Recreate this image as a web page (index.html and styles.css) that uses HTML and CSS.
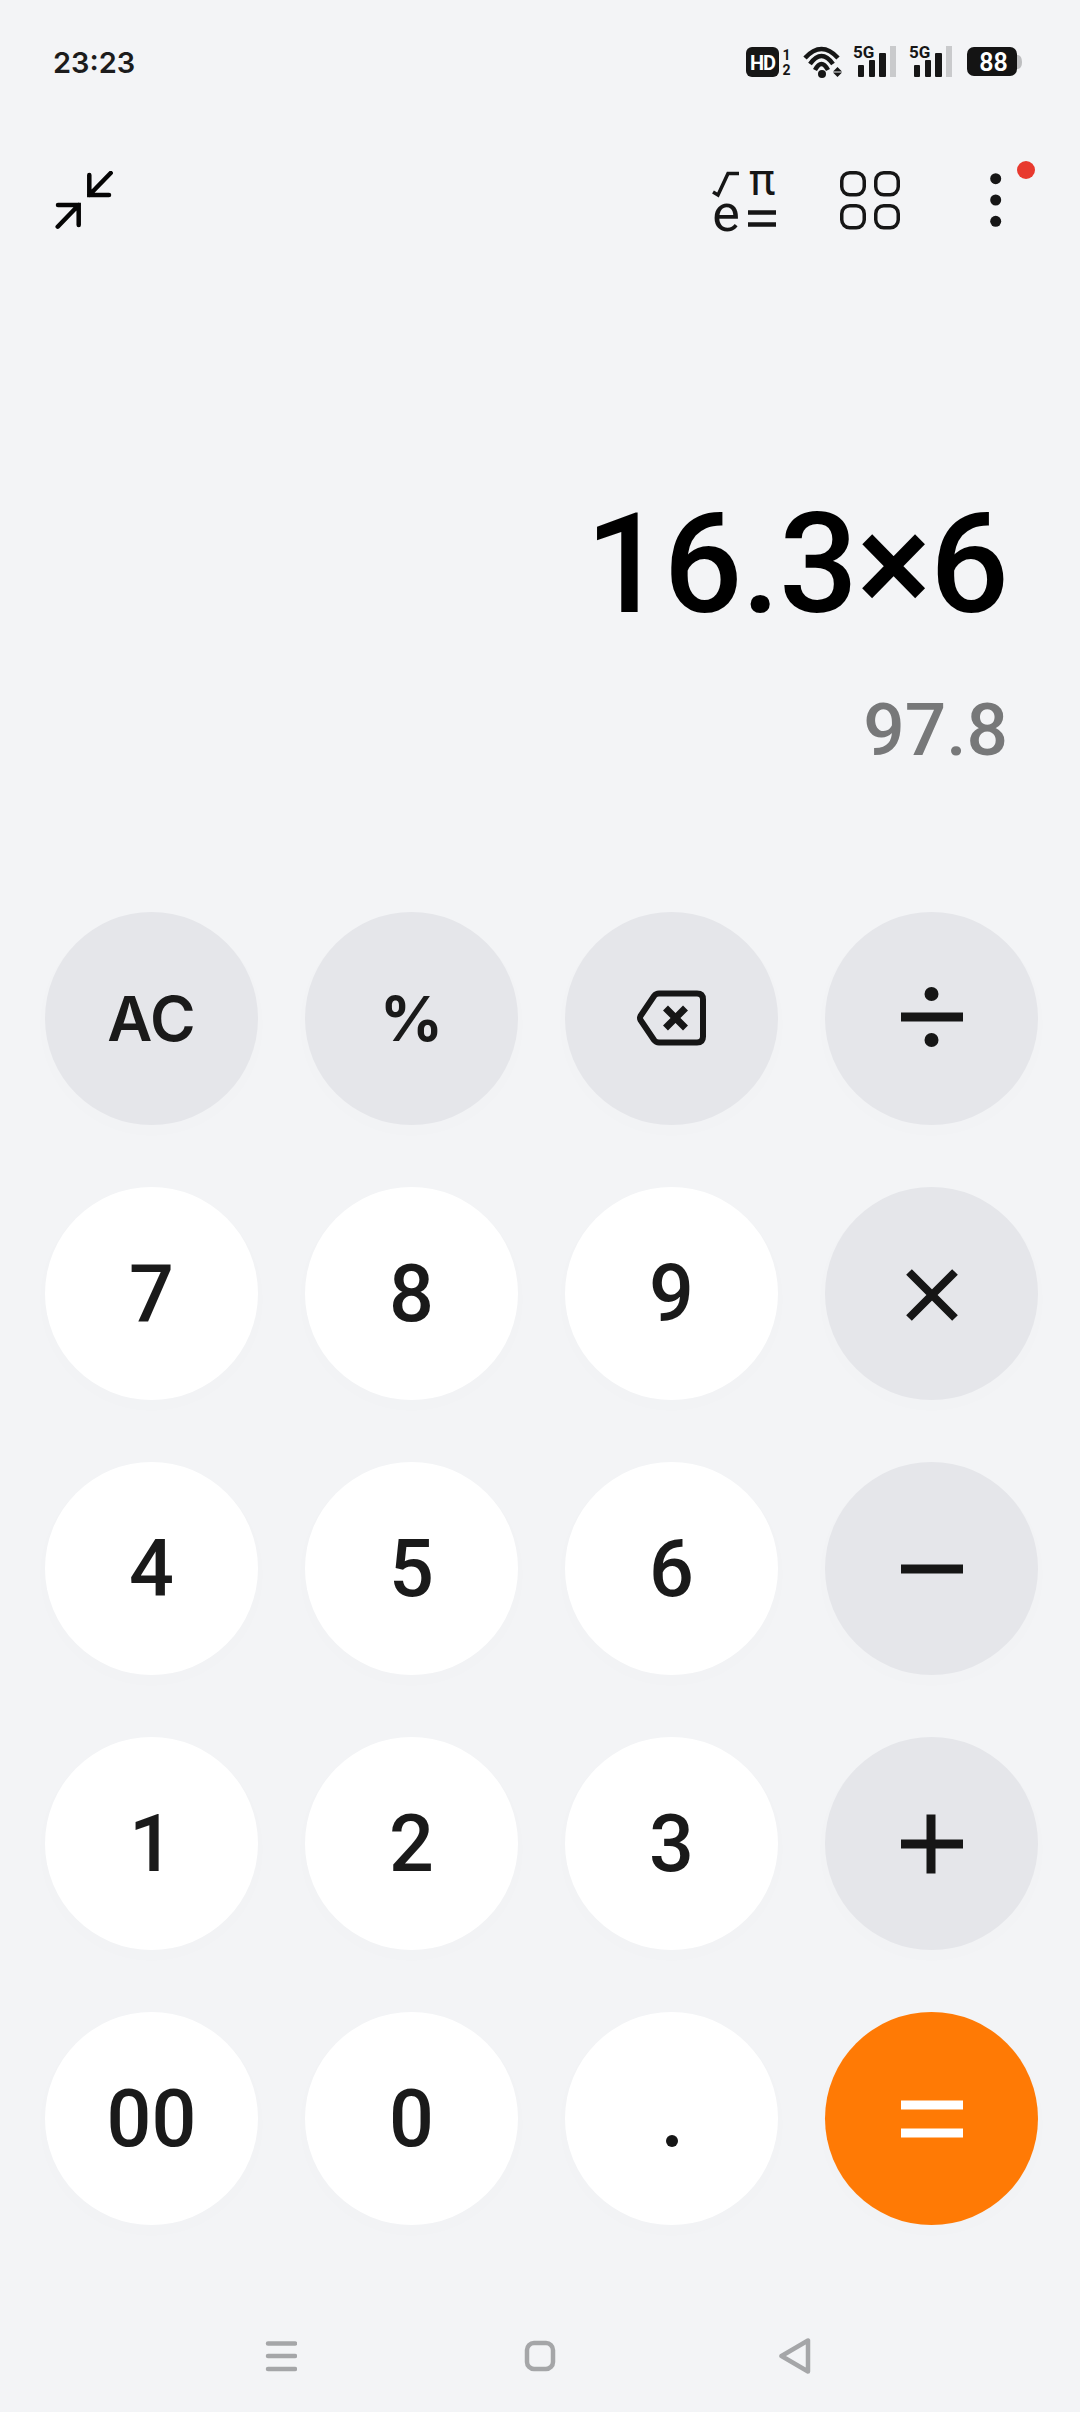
FILE: index.html
```html
<!DOCTYPE html>
<html lang="en">
<head>
<meta charset="utf-8">
<title>Calculator</title>
<link rel="stylesheet" href="styles.css">
</head>
<body>
<div class="screen">
  <header class="status">
    <span class="clock">23:23</span>
    <div class="status-icons">
      <svg class="ic-hd" width="46" height="40" viewBox="0 -4 46 40">
        <rect x="0" y="1" width="33" height="30" rx="6" fill="#161616"/>
        <text x="16.500" y="24" class="hd-text">HD</text>
        <text x="40.500" y="14" class="sim-text">1</text>
        <text x="40.500" y="29" class="sim-text">2</text>
      </svg>
      <svg class="ic-wifi" width="42" height="40" viewBox="0 -4 42 40">
        <path d="M3 12 Q19.500 -6 36 12" class="wifi"/>
        <path d="M8 18 Q19.500 2 31 18" class="wifi"/>
        <path d="M13 24 Q19.500 12 26 24" class="wifi"/>
        <circle cx="20" cy="28" r="4" fill="#161616"/>
        <path d="M31 25.500 l4.500 -4.500 l4.500 4.500z M31 26.500 l4.500 4.500 l4.500 -4.500z" fill="#161616"/>
      </svg>
      <svg class="ic-sig" width="44" height="40" viewBox="0 -4 44 40">
        <text x="0" y="12" class="g-text">5G</text>
        <rect x="5" y="19" width="6" height="12" rx="1" fill="#161616"/>
        <rect x="16" y="14" width="6" height="17" rx="1" fill="#161616"/>
        <rect x="26" y="7" width="7" height="24" rx="1" fill="#161616"/>
        <rect x="37" y="0" width="6" height="31" fill="#c9cacc"/>
      </svg>
      <svg class="ic-sig" width="44" height="40" viewBox="0 -4 44 40">
        <text x="0" y="12" class="g-text">5G</text>
        <rect x="5" y="19" width="6" height="12" rx="1" fill="#161616"/>
        <rect x="16" y="14" width="6" height="17" rx="1" fill="#161616"/>
        <rect x="26" y="7" width="7" height="24" rx="1" fill="#161616"/>
        <rect x="37" y="0" width="6" height="31" fill="#c9cacc"/>
      </svg>
      <svg class="ic-bat" width="55" height="40" viewBox="0 -4 55 40">
        <path d="M50 9 h1 q4 1 4 7 q0 6 -4 7 h-1z" fill="#bdbec0"/>
        <rect x="0" y="1" width="50" height="29" rx="7" fill="#141414"/>
        <text x="26.500" y="25" class="bat-text">88</text>
      </svg>
    </div>
  </header>

  <nav class="toolbar">
    <svg class="ic-shrink" width="60" height="60" viewBox="0 0 60 60">
      <path d="M55.700 2 L34.300 24 M34.300 4 V24 H54 M2.700 55.700 L23.700 34 M3 34 H23.700 V54" class="stroke-black"/>
    </svg>
    <div class="toolbar-right">
      <svg class="ic-sci" width="66" height="66" viewBox="0 0 66 66">
        <path d="M1 24 L6 27 L16 5.500 H27" class="sci-line"/>
        <text x="37" y="27" class="pi-text">π</text>
        <text x="14" y="63" class="e-text">e</text>
        <path d="M36 44.500 H64 M36 56.500 H64" class="sci-eq"/>
      </svg>
      <svg class="ic-grid" width="60" height="60" viewBox="0 0 60 60">
        <rect x="1.750" y="1.750" width="22.500" height="22" rx="8" class="grid-cell"/>
        <rect x="35.750" y="1.750" width="22.500" height="22" rx="8" class="grid-cell"/>
        <rect x="1.750" y="34.750" width="22.500" height="22" rx="8" class="grid-cell"/>
        <rect x="35.750" y="34.750" width="22.500" height="22" rx="8" class="grid-cell"/>
      </svg>
      <svg class="ic-more" width="54" height="80" viewBox="0 0 54 80">
        <circle cx="13.700" cy="17.700" r="5.500" fill="#161616"/>
        <circle cx="13.700" cy="39" r="5.500" fill="#161616"/>
        <circle cx="13.700" cy="60.300" r="5.500" fill="#161616"/>
        <circle cx="44" cy="9" r="9" fill="#e8392e"/>
      </svg>
    </div>
  </nav>

  <section class="display">
    <div class="expr">16.3×6</div>
    <div class="result">97.8</div>
  </section>

  <section class="keypad">
    <button class="key fn label-ac">AC</button>
    <button class="key fn label-pct">%</button>
    <button class="key fn">
      <svg class="shift-back" width="72" height="58" viewBox="0 0 72 58">
        <path d="M23 3.500 H61 Q67 3.500 67 9.500 V46.500 Q67 52.500 61 52.500 H23 Q20 52.500 18 50 L4.500 30 Q3.500 28 4.500 26 L18 6 Q20 3.500 23 3.500 Z" class="ic-key"/>
        <path d="M29.500 18 L49.500 38 M49.500 18 L29.500 38" class="ic-x"/>
      </svg>
    </button>
    <button class="key fn">
      <svg class="shift-up" width="62" height="62" viewBox="0 0 62 62">
        <rect x="0" y="26.500" width="62" height="9" fill="#161616"/>
        <circle cx="30.500" cy="8" r="7" fill="#161616"/>
        <circle cx="30.500" cy="54" r="7" fill="#161616"/>
      </svg>
    </button>

    <button class="key num">7</button>
    <button class="key num">8</button>
    <button class="key num">9</button>
    <button class="key fn">
      <svg class="shift-down" width="62" height="62" viewBox="0 0 62 62"><path d="M8 8 L54 54 M54 8 L8 54" class="ic-times"/></svg>
    </button>

    <button class="key num">4</button>
    <button class="key num">5</button>
    <button class="key num">6</button>
    <button class="key fn">
      <svg width="62" height="62" viewBox="0 0 62 62"><path d="M0 31 H62" class="ic-op"/></svg>
    </button>

    <button class="key num">1</button>
    <button class="key num">2</button>
    <button class="key num">3</button>
    <button class="key fn">
      <svg width="62" height="62" viewBox="0 0 62 62"><path d="M0 31 H62 M30 1.500 V60.500" class="ic-op"/></svg>
    </button>

    <button class="key num">00</button>
    <button class="key num">0</button>
    <button class="key num">
      <svg width="14" height="14" viewBox="0 0 14 14" class="dot"><circle cx="7" cy="7" r="6" fill="#161616"/></svg>
    </button>
    <button class="key eq">
      <svg width="62" height="38" viewBox="0 0 62 38"><rect y="0.500" width="62" height="9" fill="#fff"/><rect y="28.500" width="62" height="9" fill="#fff"/></svg>
    </button>
  </section>

  <footer class="navbar">
    <svg class="nav-menu" width="32" height="32" viewBox="0 0 32 32"><path d="M3 3.500 H30 M3 16 H30 M3 29 H30" class="ic-nav"/></svg>
    <svg width="32" height="32" viewBox="0 0 32 32"><rect x="3" y="3" width="26" height="26" rx="7" class="ic-nav"/></svg>
    <svg width="32" height="36" viewBox="0 0 32 36"><path d="M29 2.500 V33.500 L2.500 18 Z" class="ic-nav ic-nav-tri"/></svg>
  </footer>
</div>
</body>
</html>
```

FILE: styles.css
```css
* { box-sizing: border-box; }
html, body { margin: 0; padding: 0; }
body { background: #f3f4f6; font-family: Roboto, "Noto Sans", sans-serif; color: #161616; }
.screen { width: 1080px; height: 2412px; display: flex; flex-direction: column; background: #f3f4f6; overflow: hidden; }

.status { height: 48px; margin-top: 38px; padding: 0 58px 0 53px; display: flex; align-items: center; justify-content: space-between; }
.clock { font-family: Inter, Roboto, sans-serif; font-weight: 600; font-size: 29px; color: #1c1c1c; line-height: 1; }
.status-icons { display: flex; align-items: center; gap: 10px; }
.ic-sig { margin-left: -1px; }
.ic-sig + .ic-sig { margin-left: 2px; }
.ic-bat { margin-left: 4px; }
.hd-text { font: 700 20px Roboto, sans-serif; letter-spacing: -1px; fill: #fff; text-anchor: middle; }
.sim-text { font: 700 14px Roboto, sans-serif; fill: #161616; text-anchor: middle; }
.g-text { font: 700 17px Roboto, sans-serif; fill: #161616; }
.bat-text { font: 600 25px Roboto, sans-serif; fill: #fff; text-anchor: middle; }
.wifi { fill: none; stroke: #161616; stroke-width: 4.500; }

.toolbar { margin-top: 80px; height: 70px; padding: 0 44px 0 55px; display: flex; align-items: center; justify-content: space-between; }
.toolbar-right { display: flex; align-items: center; gap: 62px; }
.ic-more { margin-left: 20px; }
.stroke-black { fill: none; stroke: #050505; stroke-width: 4.500; stroke-linecap: round; }
.sci-line { fill: none; stroke: #161616; stroke-width: 3.500; }
.sci-eq { fill: none; stroke: #161616; stroke-width: 4.500; }
.pi-text { font: 400 44px Roboto, sans-serif; fill: #161616; }
.e-text { font: 400 52px Roboto, sans-serif; fill: #161616; text-anchor: middle; }
.grid-cell { fill: none; stroke: #161616; stroke-width: 3.500; }

.display { height: 676px; padding-right: 72px; display: flex; flex-direction: column; align-items: flex-end; }
.expr { margin-top: 247px; font-size: 139px; font-weight: 500; letter-spacing: -1px; line-height: 163px; color: #000; }
.result { margin-top: 41px; font-size: 73px; font-weight: 500; line-height: 86px; color: #777879; }

.keypad { padding: 0 45px; display: grid; grid-template-columns: repeat(4, 213px); grid-auto-rows: 213px; column-gap: 47px; row-gap: 62px; }
.key { width: 213px; height: 213px; border: 0; border-radius: 50%; padding: 0; display: flex; align-items: center; justify-content: center; font-family: Roboto, sans-serif; color: #1a1a1a; box-shadow: 0 6px 24px rgba(0, 0, 0, .012); }
.num { background: #fff; font-size: 79px; font-weight: 500; }
.fn { background: #e5e6ea; }
.eq { background: #ff7a05; }
.label-ac { font-family: Inter, Roboto, sans-serif; font-size: 62px; font-weight: 600; }
.label-pct { font-family: Inter, Roboto, sans-serif; font-size: 62px; font-weight: 700; }
.ic-key { fill: none; stroke: #161616; stroke-width: 6; }
.ic-x { fill: none; stroke: #161616; stroke-width: 7; }
.ic-op { fill: none; stroke: #161616; stroke-width: 9; }
.ic-times { fill: none; stroke: #161616; stroke-width: 8; }
.shift-up { margin-bottom: 4px; }
.shift-down { margin-top: 3px; }
.shift-back { margin-bottom: 0; }
.dot { margin-top: 45px; }

.navbar { margin-top: 113px; padding-left: 265px; display: flex; align-items: center; gap: 223px; }
.nav-menu { margin-right: 4px; }
.ic-nav { fill: none; stroke: #a5a6a8; stroke-width: 4.500; stroke-linecap: round; }
.ic-nav-tri { stroke-linejoin: round; }
```
